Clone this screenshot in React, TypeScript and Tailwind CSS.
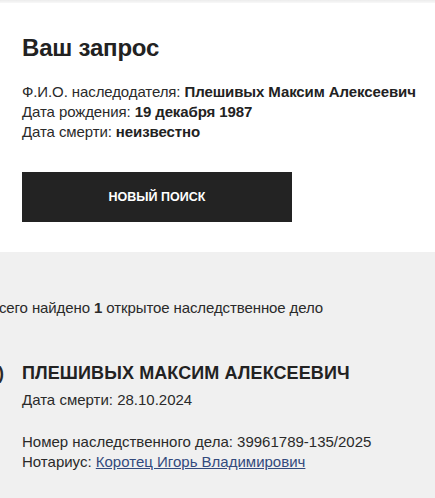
import React from "react";

export default function App() {
  return (
    <div
      className="w-[435px] h-[498px] overflow-hidden bg-white text-[#2a2a2a]"
      style={{ fontFamily: '"Liberation Sans", Arial, sans-serif' }}
    >
      <div className="h-[3px] bg-gradient-to-b from-[#ececec] to-[#f8f8f8]" />
      <div className="px-[22px] pt-[30px] pb-[30px]">
        <h1 className="text-[24px] font-bold leading-[30px] tracking-[-0.2px] text-[#222]">Ваш запрос</h1>
        <div className="mt-[19px] text-[15px] leading-[20px] whitespace-nowrap tracking-[-0.1px]">
          <div>
            Ф.И.О. наследодателя: <b className="text-[#222]">Плешивых Максим Алексеевич</b>
          </div>
          <div>
            Дата рождения: <b className="text-[#222]">19 декабря 1987</b>
          </div>
          <div>
            Дата смерти: <b className="text-[#222]">неизвестно</b>
          </div>
        </div>
        <button className="mt-[30px] w-[270px] h-[50px] bg-[#232323] text-white text-[12.5px] font-bold uppercase flex items-center justify-center">
          Новый поиск
        </button>
      </div>
      <div className="bg-[#f0f0f0] h-[300px] pt-[46px]">
        <div className="ml-[-11px] text-[15px] leading-[20px] whitespace-nowrap tracking-[-0.1px]">
          Всего найдено <b>1</b> открытое наследственное дело
        </div>
        <div className="mt-[43px] flex ml-[-12px]">
          <div className="w-[34px] text-[18px] leading-[24px] font-bold">1)</div>
          <div>
            <div className="text-[18px] leading-[24px] font-bold uppercase text-[#222] tracking-[0.1px]">
              Плешивых Максим Алексеевич
            </div>
            <div className="mt-[5px] text-[15px] leading-[20px]">Дата смерти: 28.10.2024</div>
            <div className="mt-[22px] text-[15px] leading-[20px]">
              Номер наследственного дела: 39961789-135/2025
            </div>
            <div className="text-[15px] leading-[20px]">
              Нотариус:{" "}
              <a href="#" className="text-[#334a7d] underline">
                Коротец Игорь Владимирович
              </a>
            </div>
          </div>
        </div>
      </div>
    </div>
  );
}
